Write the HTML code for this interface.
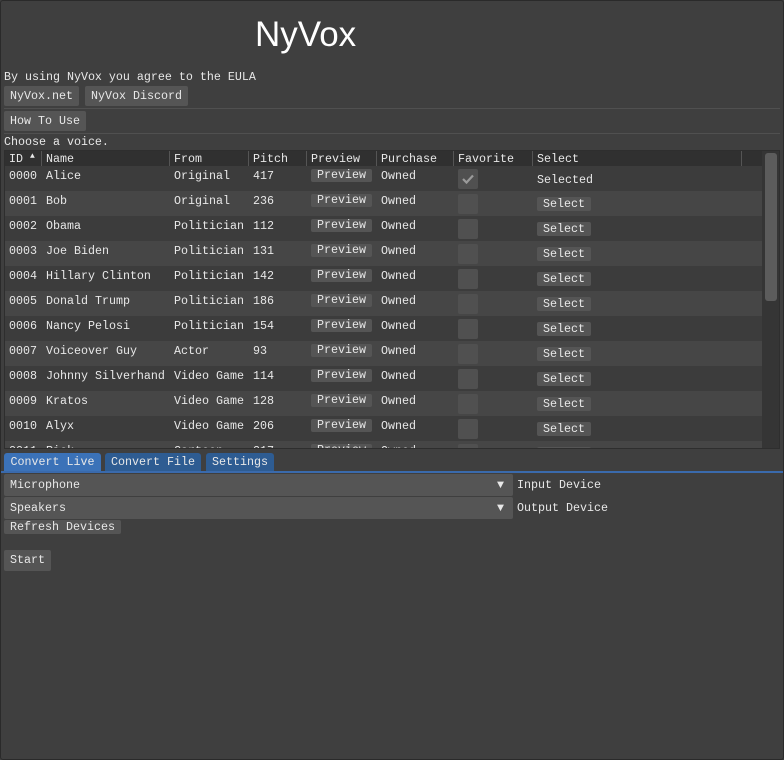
<!DOCTYPE html>
<html><head><meta charset="utf-8"><style>
*{margin:0;padding:0;box-sizing:border-box}
body{width:784px;height:760px;background:#3f3f3f;overflow:hidden;position:relative;font-family:"Liberation Mono",monospace;font-size:11.67px;color:#e8e8e8;line-height:14px}
.a{position:absolute;white-space:pre}
.frame{position:absolute;left:0;top:0;width:784px;height:760px;border:1px solid #2a2a2a;border-radius:3px}
.btn{position:absolute;background:#555;border-radius:2px;text-align:center;white-space:pre}
.sep{position:absolute;left:4px;width:776px;height:1px;background:#505050}
.row{position:absolute;left:5px;width:757px;height:25px}
.cb{position:absolute;width:20px;height:20px;background:#505050;border-radius:2px}
.vl{position:absolute;top:151px;width:1px;height:15px;background:#555}
.pb{position:absolute;left:311px;width:61px;height:13px;line-height:13px;background:#555;border-radius:2px;text-align:center}
.sb{position:absolute;left:537px;width:54px;height:14px;line-height:14px;background:#555;border-radius:2px;text-align:center}
</style></head><body>
<div class="frame"></div>
<div class="a" style="left:255px;top:15px;font-family:'Liberation Sans',sans-serif;font-size:35px;line-height:40px;color:#fff">NyVox</div>
<div class="a" style="left:4px;top:70px">By using NyVox you agree to the EULA</div>
<div class="btn" style="left:4px;top:86px;width:75px;height:20px;line-height:20px">NyVox.net</div>
<div class="btn" style="left:85px;top:86px;width:103px;height:20px;line-height:20px">NyVox Discord</div>
<div class="sep" style="top:108px"></div>
<div class="btn" style="left:4px;top:111px;width:82px;height:20px;line-height:20px">How To Use</div>
<div class="sep" style="top:133px"></div>
<div class="a" style="left:4px;top:135px">Choose a voice.</div>
<div style="position:absolute;left:4px;top:150px;width:776px;height:299px;border:1px solid #2e2e2e;background:#3b3b3b"></div>
<div style="position:absolute;left:5px;top:151px;width:757px;height:15px;background:#303030"></div>
<div class="vl" style="left:41px"></div><div class="vl" style="left:169px"></div><div class="vl" style="left:248px"></div><div class="vl" style="left:306px"></div><div class="vl" style="left:376px"></div><div class="vl" style="left:453px"></div><div class="vl" style="left:532px"></div><div class="vl" style="left:741px"></div>
<div class="a" style="left:9px;top:152px">ID</div>
<div class="a" style="left:30px;top:150px;font-size:8px">▲</div>
<div class="a" style="left:46px;top:152px">Name</div>
<div class="a" style="left:174px;top:152px">From</div>
<div class="a" style="left:253px;top:152px">Pitch</div>
<div class="a" style="left:311px;top:152px">Preview</div>
<div class="a" style="left:381px;top:152px">Purchase</div>
<div class="a" style="left:458px;top:152px">Favorite</div>
<div class="a" style="left:537px;top:152px">Select</div>
<div style="position:absolute;left:762px;top:151px;width:17px;height:297px;background:#353535"></div>
<div style="position:absolute;left:765px;top:153px;width:12px;height:148px;background:#5c5c5c;border-radius:3px"></div>
<div style="position:absolute;left:5px;top:166px;width:757px;height:282px;overflow:hidden">
<div style="position:relative;top:-166px;left:-5px">
<div class="row" style="top:166px;background:#3c3c3c"></div>
<div class="row" style="top:191px;background:#464646"></div>
<div class="row" style="top:216px;background:#3c3c3c"></div>
<div class="row" style="top:241px;background:#464646"></div>
<div class="row" style="top:266px;background:#3c3c3c"></div>
<div class="row" style="top:291px;background:#464646"></div>
<div class="row" style="top:316px;background:#3c3c3c"></div>
<div class="row" style="top:341px;background:#464646"></div>
<div class="row" style="top:366px;background:#3c3c3c"></div>
<div class="row" style="top:391px;background:#464646"></div>
<div class="row" style="top:416px;background:#3c3c3c"></div>
<div class="row" style="top:441px;background:#464646"></div>

<div class="a" style="left:9px;top:169px">0000</div><div class="a" style="left:46px;top:169px">Alice</div><div class="a" style="left:174px;top:169px">Original</div><div class="a" style="left:253px;top:169px">417</div>
<div class="a" style="left:9px;top:194px">0001</div><div class="a" style="left:46px;top:194px">Bob</div><div class="a" style="left:174px;top:194px">Original</div><div class="a" style="left:253px;top:194px">236</div>
<div class="a" style="left:9px;top:219px">0002</div><div class="a" style="left:46px;top:219px">Obama</div><div class="a" style="left:174px;top:219px">Politician</div><div class="a" style="left:253px;top:219px">112</div>
<div class="a" style="left:9px;top:244px">0003</div><div class="a" style="left:46px;top:244px">Joe Biden</div><div class="a" style="left:174px;top:244px">Politician</div><div class="a" style="left:253px;top:244px">131</div>
<div class="a" style="left:9px;top:269px">0004</div><div class="a" style="left:46px;top:269px">Hillary Clinton</div><div class="a" style="left:174px;top:269px">Politician</div><div class="a" style="left:253px;top:269px">142</div>
<div class="a" style="left:9px;top:294px">0005</div><div class="a" style="left:46px;top:294px">Donald Trump</div><div class="a" style="left:174px;top:294px">Politician</div><div class="a" style="left:253px;top:294px">186</div>
<div class="a" style="left:9px;top:319px">0006</div><div class="a" style="left:46px;top:319px">Nancy Pelosi</div><div class="a" style="left:174px;top:319px">Politician</div><div class="a" style="left:253px;top:319px">154</div>
<div class="a" style="left:9px;top:344px">0007</div><div class="a" style="left:46px;top:344px">Voiceover Guy</div><div class="a" style="left:174px;top:344px">Actor</div><div class="a" style="left:253px;top:344px">93</div>
<div class="a" style="left:9px;top:369px">0008</div><div class="a" style="left:46px;top:369px">Johnny Silverhand</div><div class="a" style="left:174px;top:369px">Video Game</div><div class="a" style="left:253px;top:369px">114</div>
<div class="a" style="left:9px;top:394px">0009</div><div class="a" style="left:46px;top:394px">Kratos</div><div class="a" style="left:174px;top:394px">Video Game</div><div class="a" style="left:253px;top:394px">128</div>
<div class="a" style="left:9px;top:419px">0010</div><div class="a" style="left:46px;top:419px">Alyx</div><div class="a" style="left:174px;top:419px">Video Game</div><div class="a" style="left:253px;top:419px">206</div>
<div class="a" style="left:9px;top:444px">0011</div><div class="a" style="left:46px;top:444px">Rick</div><div class="a" style="left:174px;top:444px">Cartoon</div><div class="a" style="left:253px;top:444px">217</div>

<div class="pb" style="top:169px">Preview</div><div class="a" style="left:381px;top:169px">Owned</div>
<div class="pb" style="top:194px">Preview</div><div class="a" style="left:381px;top:194px">Owned</div>
<div class="pb" style="top:219px">Preview</div><div class="a" style="left:381px;top:219px">Owned</div>
<div class="pb" style="top:244px">Preview</div><div class="a" style="left:381px;top:244px">Owned</div>
<div class="pb" style="top:269px">Preview</div><div class="a" style="left:381px;top:269px">Owned</div>
<div class="pb" style="top:294px">Preview</div><div class="a" style="left:381px;top:294px">Owned</div>
<div class="pb" style="top:319px">Preview</div><div class="a" style="left:381px;top:319px">Owned</div>
<div class="pb" style="top:344px">Preview</div><div class="a" style="left:381px;top:344px">Owned</div>
<div class="pb" style="top:369px">Preview</div><div class="a" style="left:381px;top:369px">Owned</div>
<div class="pb" style="top:394px">Preview</div><div class="a" style="left:381px;top:394px">Owned</div>
<div class="pb" style="top:419px">Preview</div><div class="a" style="left:381px;top:419px">Owned</div>
<div class="pb" style="top:444px">Preview</div><div class="a" style="left:381px;top:444px">Owned</div>

<div class="cb" style="left:458px;top:169px"><svg width="20" height="20"><path d="M5 10 L8.5 13.5 L15 6.5" stroke="#9a9a9a" stroke-width="2.2" fill="none"/></svg></div>
<div class="cb" style="left:458px;top:194px"></div><div class="cb" style="left:458px;top:219px"></div><div class="cb" style="left:458px;top:244px"></div><div class="cb" style="left:458px;top:269px"></div><div class="cb" style="left:458px;top:294px"></div><div class="cb" style="left:458px;top:319px"></div><div class="cb" style="left:458px;top:344px"></div><div class="cb" style="left:458px;top:369px"></div><div class="cb" style="left:458px;top:394px"></div><div class="cb" style="left:458px;top:419px"></div><div class="cb" style="left:458px;top:444px"></div>

<div class="a" style="left:537px;top:173px">Selected</div>
<div class="sb" style="top:197px">Select</div>
<div class="sb" style="top:222px">Select</div>
<div class="sb" style="top:247px">Select</div>
<div class="sb" style="top:272px">Select</div>
<div class="sb" style="top:297px">Select</div>
<div class="sb" style="top:322px">Select</div>
<div class="sb" style="top:347px">Select</div>
<div class="sb" style="top:372px">Select</div>
<div class="sb" style="top:397px">Select</div>
<div class="sb" style="top:422px">Select</div>
<div class="sb" style="top:447px">Select</div>
</div></div>

<div class="btn" style="left:4px;top:453px;width:97px;height:19px;line-height:19px;background:#3b72b8;border-radius:3px 3px 0 0">Convert Live</div>
<div class="btn" style="left:105px;top:453px;width:96px;height:19px;line-height:19px;background:#2e5c92;border-radius:3px 3px 0 0">Convert File</div>
<div class="btn" style="left:206px;top:453px;width:68px;height:19px;line-height:19px;background:#2e5c92;border-radius:3px 3px 0 0">Settings</div>
<div style="position:absolute;left:1px;top:471px;width:782px;height:2px;background:#3a6aac"></div>
<div style="position:absolute;left:4px;top:474px;width:509px;height:22px;background:#555;border-radius:2px"></div>
<div class="a" style="left:10px;top:478px">Microphone</div>
<div class="a" style="left:497px;top:478px">▼</div>
<div class="a" style="left:517px;top:478px">Input Device</div>
<div style="position:absolute;left:4px;top:497px;width:509px;height:22px;background:#555;border-radius:2px"></div>
<div class="a" style="left:10px;top:501px">Speakers</div>
<div class="a" style="left:497px;top:501px">▼</div>
<div class="a" style="left:517px;top:501px">Output Device</div>
<div class="btn" style="left:4px;top:520px;width:117px;height:14px;line-height:14px">Refresh Devices</div>
<div class="btn" style="left:4px;top:550px;width:47px;height:21px;line-height:21px">Start</div>
</body></html>
